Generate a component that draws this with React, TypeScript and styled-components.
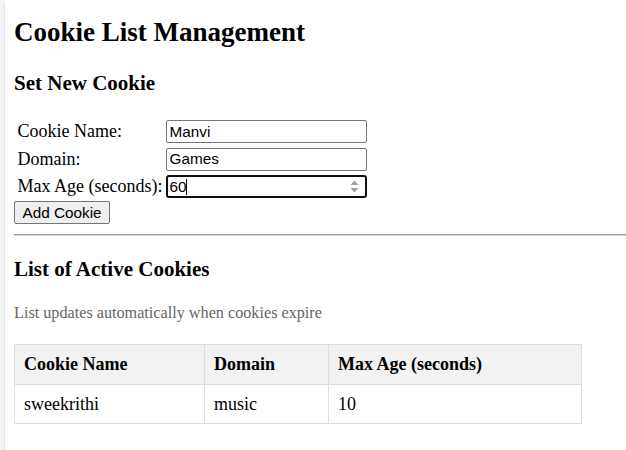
import React from "react";
import styled, { createGlobalStyle } from "styled-components";

const GlobalStyle = createGlobalStyle`
  html, body {
    margin: 0;
    padding: 0;
    background: #ffffff;
  }
  body {
    font-family: "Liberation Serif", "Times New Roman", serif;
    color: #000000;
  }
`;

const Frame = styled.div`
  display: flex;
  min-height: 100vh;
`;

const Gutter = styled.div`
  flex: 0 0 4px;
  background: #f3f3f3;
  border-right: 1px solid #e3e3e3;
  border-top-right-radius: 4px;
`;

const Content = styled.main`
  flex: 1;
  display: flex;
  flex-direction: column;
  padding: 17px 0 0 9px;
  min-width: 0;
`;

const Title = styled.h1`
  margin: 0;
  font-size: 27px;
  line-height: 31px;
  font-weight: bold;
`;

const Heading = styled.h3<{ $gap: number }>`
  margin: ${(p) => p.$gap}px 0 0 0;
  font-size: 21px;
  line-height: 24px;
  font-weight: bold;
`;

const FormGrid = styled.div`
  margin-top: 25.5px;
  display: grid;
  grid-template-columns: 148.5px 201px;
  row-gap: 4.5px;
  padding-left: 3.5px;
  align-items: center;
`;

const Label = styled.label`
  font-size: 18px;
  line-height: 21px;
  white-space: nowrap;
`;

const Field = styled.span`
  position: relative;
  display: block;
  width: 201px;
  height: 23px;
`;

const TextInput = styled.input<{ $focused?: boolean }>`
  box-sizing: border-box;
  width: 100%;
  height: 100%;
  margin: 0;
  padding: 0 2px;
  font-family: "Liberation Sans", Arial, sans-serif;
  font-size: 15.3px;
  color: #000;
  background: #fff;
  border: ${(p) => (p.$focused ? "2px solid #101010" : "1px solid #767676")};
  border-radius: ${(p) => (p.$focused ? "3px" : "2px")};
  padding-left: ${(p) => (p.$focused ? "1.5px" : "2.5px")};
  outline: none;
  -moz-appearance: textfield;
  &::-webkit-outer-spin-button,
  &::-webkit-inner-spin-button {
    -webkit-appearance: none;
    margin: 0;
  }
`;

const Caret = styled.span`
  position: absolute;
  left: 20px;
  top: 4px;
  width: 1px;
  height: 16px;
  background: #000;
`;

const Spinner = styled.svg`
  position: absolute;
  right: 8px;
  top: 4px;
`;

const Button = styled.button`
  align-self: flex-start;
  margin-top: 3px;
  height: 23px;
  padding: 0 7.5px;
  font-family: "Liberation Sans", Arial, sans-serif;
  font-size: 15.3px;
  color: #000;
  background: #efefef;
  border: 1px solid #767676;
  border-radius: 2px;
  cursor: pointer;
`;

const Rule = styled.hr`
  margin: 10px 0 0 0;
  height: 0;
  border: none;
  border-top: 1px solid #9a9a9a;
  border-bottom: 1px solid #d6d6d6;
`;

const Note = styled.p`
  margin: 23.3px 0 0 0;
  font-size: 16.2px;
  line-height: 18.6px;
  color: #666666;
`;

const Table = styled.table`
  margin-top: 21.5px;
  width: 567px;
  border-collapse: collapse;
  table-layout: fixed;
`;

const Th = styled.th`
  background: #f2f2f2;
  border: 1px solid #dddddd;
  padding: 9px;
  text-align: left;
  font-size: 18px;
  line-height: 20.7px;
  font-weight: bold;
`;

const Td = styled.td`
  border: 1px solid #dddddd;
  padding: 9px;
  text-align: left;
  font-size: 18px;
  line-height: 20.7px;
`;

const cookies = [{ name: "sweekrithi", domain: "music", maxAge: 10 }];

export default function App() {
  return (
    <>
      <GlobalStyle />
      <Frame>
        <Gutter />
        <Content>
          <Title>Cookie List Management</Title>
          <Heading $gap={22.5}>Set New Cookie</Heading>
          <FormGrid>
            <Label htmlFor="cname">Cookie Name:</Label>
            <Field>
              <TextInput id="cname" type="text" defaultValue="Manvi" />
            </Field>
            <Label htmlFor="cdomain">Domain:</Label>
            <Field>
              <TextInput id="cdomain" type="text" defaultValue="Games" />
            </Field>
            <Label htmlFor="cage">Max Age (seconds):</Label>
            <Field>
              <TextInput id="cage" type="number" defaultValue="60" $focused />
              <Caret />
              <Spinner width="9" height="15" viewBox="0 0 9 15">
                <path d="M4.5 1.5 L8.5 6 L0.5 6 Z" fill="#a0a0a0" />
                <path d="M0.5 9 L8.5 9 L4.5 13.5 Z" fill="#a0a0a0" />
              </Spinner>
            </Field>
          </FormGrid>
          <Button type="button">Add Cookie</Button>
          <Rule />
          <Heading $gap={20.6}>List of Active Cookies</Heading>
          <Note>List updates automatically when cookies expire</Note>
          <Table>
            <colgroup>
              <col style={{ width: 190 }} />
              <col style={{ width: 124 }} />
              <col style={{ width: 253 }} />
            </colgroup>
            <thead>
              <tr>
                <Th>Cookie Name</Th>
                <Th>Domain</Th>
                <Th>Max Age (seconds)</Th>
              </tr>
            </thead>
            <tbody>
              {cookies.map((c) => (
                <tr key={c.name}>
                  <Td>{c.name}</Td>
                  <Td>{c.domain}</Td>
                  <Td>{c.maxAge}</Td>
                </tr>
              ))}
            </tbody>
          </Table>
        </Content>
      </Frame>
    </>
  );
}
